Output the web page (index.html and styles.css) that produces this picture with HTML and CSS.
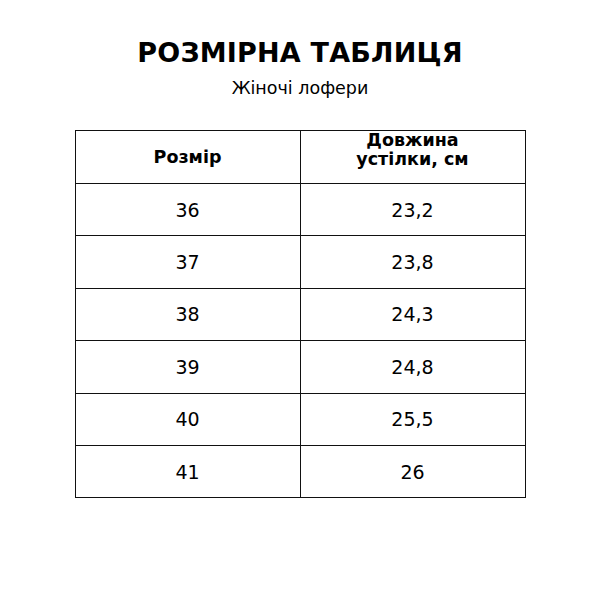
FILE: index.html
```html
<!DOCTYPE html>
<html lang="uk">
<head>
<meta charset="utf-8">
<link rel="stylesheet" href="styles.css">
</head>
<body>
<div class="page">
  <h1 class="title">РОЗМІРНА ТАБЛИЦЯ</h1>
  <p class="subtitle">Жіночі лофери</p>
  <table class="sizes">
    <thead>
      <tr><th>Розмір</th><th class="long">Довжина<br>устілки, см</th></tr>
    </thead>
    <tbody>
      <tr><td>36</td><td>23,2</td></tr>
      <tr><td>37</td><td>23,8</td></tr>
      <tr><td>38</td><td>24,3</td></tr>
      <tr><td>39</td><td>24,8</td></tr>
      <tr><td>40</td><td>25,5</td></tr>
      <tr><td>41</td><td>26</td></tr>
    </tbody>
  </table>
</div>
</body>
</html>
```
FILE: styles.css
```css
html, body { margin: 0; padding: 0; background: #fff; }
body { font-family: "DejaVu Sans", sans-serif; color: #000; }
.page { width: 600px; height: 600px; display: flex; flex-direction: column; align-items: center; }
.title { margin: 37px 0 0; font-size: 27px; font-weight: bold; line-height: 32px; letter-spacing: 0.2px; }
.subtitle { margin: 9px 0 0; font-size: 17.5px; line-height: 20px; }
.sizes { margin-top: 32px; width: 451px; border-collapse: collapse; table-layout: fixed; }
.sizes th, .sizes td { border: 1.8px solid #111; text-align: center; padding: 0; width: 50%; }
.sizes th { height: 52px; font-size: 17.5px; font-weight: bold; line-height: 19px; }
.sizes th.long { vertical-align: top; padding-top: 0; }
.sizes td { height: 51.4px; font-size: 19px; }
```
